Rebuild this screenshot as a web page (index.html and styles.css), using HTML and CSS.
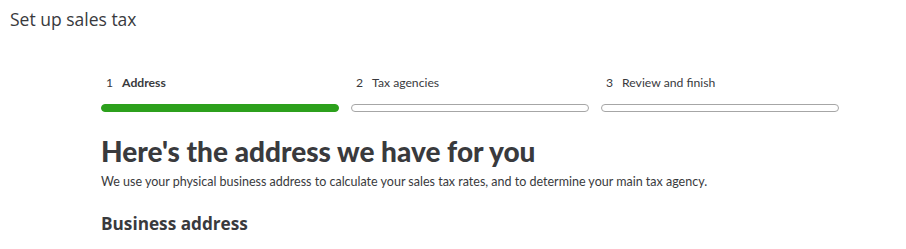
FILE: index.html
```html
<!DOCTYPE html>
<html lang="en">

<head>
    <meta charset="UTF-8">
    <title>Set up sales tax</title>
    <link rel="stylesheet" href="styles.css">
</head>

<body>
    <header class="page-header">
        <h1 class="page-title">Set up sales tax</h1>
    </header>

    <main class="wizard">
        <!-- Steps -->
        <ol class="steps">
            <li class="step step-active">
                <div class="step-label"><span class="step-num">1</span>Address</div>
                <div class="step-bar"></div>
            </li>
            <li class="step">
                <div class="step-label"><span class="step-num">2</span>Tax agencies</div>
                <div class="step-bar"></div>
            </li>
            <li class="step">
                <div class="step-label"><span class="step-num">3</span>Review and finish</div>
                <div class="step-bar"></div>
            </li>
        </ol>

        <h2 class="wizard-heading">Here's the address we have for you</h2>
        <p class="wizard-intro">We use your physical business address to calculate your sales tax rates, and to determine your main tax agency.</p>

        <h3 class="section-title">Business address</h3>
    </main>
</body>

</html>
```

FILE: styles.css
```css
/* Page */
body {
    margin: 0;
    background: #fff;
    color: #393a3d;
    font-family: Lato, "Open Sans", sans-serif;
}

.page-header {
    padding: 8px 10px 0 10px;
}

.page-title {
    margin: 0;
    font-family: "Open Sans", sans-serif;
    font-size: 17.5px;
    font-weight: 400;
    color: #393a3d;
    line-height: 22px;
}

/* Wizard */
.wizard {
    width: 738px;
    margin: 0 0 0 101px;
}

.steps {
    list-style: none;
    display: flex;
    gap: 12px;
    margin: 45px 0 0 0;
    padding: 0;
}

.step {
    width: 238px;
}

.step-label {
    font-size: 12.2px;
    line-height: 16px;
    color: #393a3d;
    padding-left: 5px;
}

.step-active .step-label {
    font-weight: 700;
}

.step-num {
    display: inline-block;
    margin-right: 9px;
    font-weight: 400;
}

.step-bar {
    height: 6px;
    margin-top: 13px;
    border: 1px solid #a6a6a6;
    border-radius: 5px;
}

.step-active .step-bar {
    background: #2ca01c;
    border-color: #2ca01c;
}

.wizard-heading {
    margin: 22px 0 0 0;
    font-size: 28px;
    font-weight: 900;
    line-height: 34px;
    color: #393a3d;
}

.wizard-intro {
    margin: 6px 0 0 0;
    font-size: 12.5px;
    line-height: 16px;
    color: #393a3d;
}

.section-title {
    margin: 22px 0 0 0;
    font-family: "Open Sans", sans-serif;
    font-size: 17.2px;
    font-weight: 700;
    line-height: 24px;
}
```
